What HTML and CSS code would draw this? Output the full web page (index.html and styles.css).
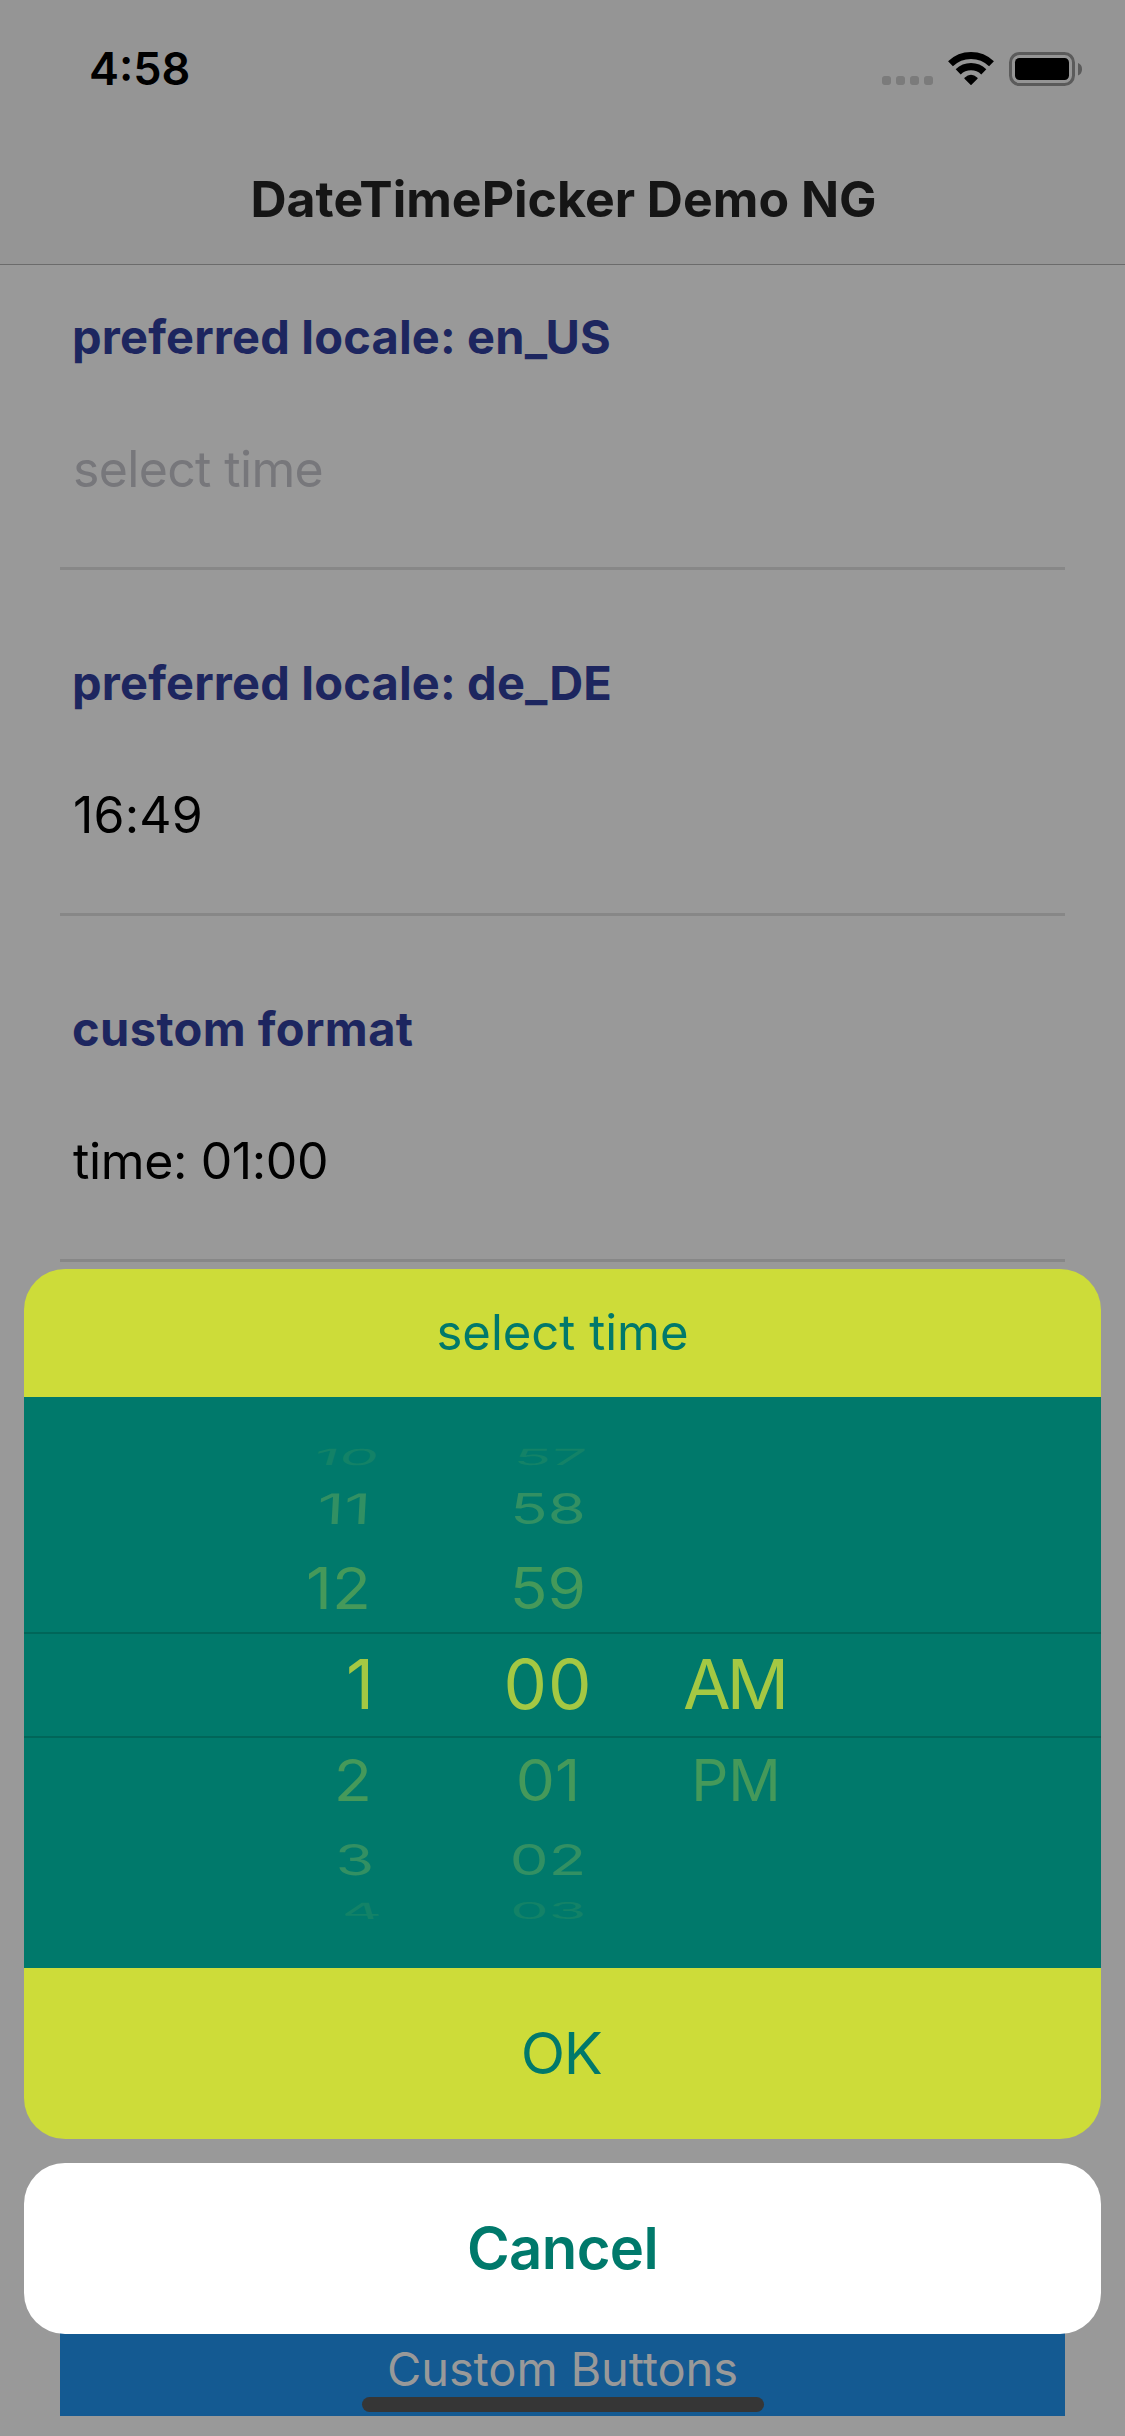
FILE: index.html
```
<!DOCTYPE html>
<html lang="en">
<head>
<meta charset="utf-8">
<title>DateTimePicker Demo NG</title>
<link rel="stylesheet" href="styles.css">
</head>
<body>
<div class="screen">
  <header class="header">
    <div class="status">
      <span class="clock">4:58</span>
      <div class="indicators">
        <svg width="51" height="34" viewBox="0 0 51 34" fill="#7b7b7b">
          <rect x="0" y="24" width="9" height="9" rx="3"/>
          <rect x="14" y="24" width="9" height="9" rx="3"/>
          <rect x="28" y="24" width="9" height="9" rx="3"/>
          <rect x="42" y="24" width="9" height="9" rx="3"/>
        </svg>
        <svg width="46" height="34" viewBox="0 0 46 34" fill="none" stroke="#000">
          <path d="M2.5 11.8A29.5 29.5 0 0 1 43.5 11.8" stroke-width="7"/>
          <path d="M10.2 19.8A18.4 18.4 0 0 1 35.8 19.8" stroke-width="7.2"/>
          <path d="M17 26.2Q23 20.8 29 26.2L23 32.2Z" fill="#000" stroke-width="1.4" stroke-linejoin="round"/>
        </svg>
        <svg width="73" height="34" viewBox="0 0 73 34">
          <rect x="1.5" y="1.5" width="63" height="31" rx="9" fill="none" stroke="#5b5b5b" stroke-width="3"/>
          <rect x="6" y="6" width="54" height="22" rx="4.5"/>
          <path d="M69 11Q73 12.4 73 17.2T69 23.4Z" fill="#5b5b5b"/>
        </svg>
      </div>
    </div>
    <h1 class="title">DateTimePicker Demo NG</h1>
  </header>

  <main class="form">
    <section class="field">
      <label class="label">preferred locale: en_US</label>
      <div class="value placeholder">select time</div>
    </section>
    <section class="field">
      <label class="label">preferred locale: de_DE</label>
      <div class="value clock-value">16:49</div>
    </section>
    <section class="field">
      <label class="label custom">custom format</label>
      <div class="value">time: 01:00</div>
    </section>
    <div class="action">Custom Buttons</div>
  </main>

  <div class="sheet">
    <div class="dialog">
      <div class="dialog-title">select time</div>
      <div class="wheel">
        <div class="row far up"><span class="hour">10</span><span class="minute">57</span></div>
        <div class="row mid up"><span class="hour">11</span><span class="minute">58</span></div>
        <div class="row near up"><span class="hour">12</span><span class="minute">59</span></div>
        <div class="row selected"><span class="hour">1</span><span class="minute">00</span><span class="period">AM</span></div>
        <div class="row near down"><span class="hour">2</span><span class="minute">01</span><span class="period">PM</span></div>
        <div class="row mid down"><span class="hour">3</span><span class="minute">02</span></div>
        <div class="row far down"><span class="hour">4</span><span class="minute">03</span></div>
      </div>
      <div class="ok">OK</div>
    </div>
    <div class="cancel">Cancel</div>
  </div>
  <div class="home-indicator"></div>
</div>
</body>
</html>
```
FILE: styles.css
```
* { box-sizing: border-box; }

body {
  margin: 0;
  font-family: Inter, "Liberation Sans", sans-serif;
}

.screen {
  position: relative;
  display: flex;
  flex-direction: column;
  width: 1125px;
  height: 2436px;
  overflow: hidden;
  background: #999;
}

/* Status bar and title */
.header {
  height: 265px;
  background: #959595;
  border-bottom: 1px solid #6b6b6b;
}

.status {
  display: flex;
  justify-content: space-between;
  align-items: center;
  height: 132px;
  padding: 6px 43px 0 89px;
}

.clock {
  font-size: 45px;
  font-weight: 600;
  line-height: 60px;
}

.indicators {
  display: flex;
  gap: 15px;
}

.indicators svg { display: block; }

.title {
  margin: 0;
  padding: 1px 0 0 2px;
  text-align: center;
  font-size: 50px;
  font-weight: 700;
  line-height: 132px;
  color: #151515;
}

/* Form */
.form {
  flex: 1;
  display: flex;
  flex-direction: column;
  gap: 41px;
  padding: 0 60px 20px;
}

.field {
  height: 305px;
  padding: 42px 12px 0;
  border-bottom: 3px solid #878787;
}

.label {
  display: block;
  font-size: 47px;
  font-weight: 700;
  line-height: 60px;
  letter-spacing: 0.17px;
  color: #1d265f;
}

.custom { letter-spacing: 0.4px; }

.value {
  margin: 72px 0 0 1px;
  font-size: 50px;
  line-height: 60px;
  letter-spacing: -0.37px;
  color: #000;
}

.clock-value { letter-spacing: 0.2px; }

.placeholder {
  letter-spacing: -0.65px;
  color: #77777b;
}

.action {
  margin-top: auto;
  background: #145a92;
  color: #999;
  text-align: center;
  font-size: 47px;
  line-height: 94px;
  letter-spacing: -0.15px;
}

/* Action sheet */
.sheet {
  position: absolute;
  left: 24px;
  right: 24px;
  bottom: 102px;
  display: flex;
  flex-direction: column;
  gap: 24px;
  text-align: center;
  color: #00796b;
}

.dialog {
  overflow: hidden;
  border-radius: 41px;
  background: #cddc39;
}

.dialog-title {
  height: 128px;
  font-size: 49px;
  line-height: 127px;
}

.ok {
  padding-right: 3px;
  font-size: 58px;
  line-height: 171px;
  letter-spacing: -1.3px;
}

.cancel {
  border-radius: 41px;
  background: #fff;
  font-size: 58px;
  font-weight: 600;
  line-height: 171px;
  letter-spacing: -0.6px;
}

/* Time wheel */
.wheel {
  display: flex;
  flex-direction: column;
  height: 571px;
  padding-top: 35px;
  background: #00796b;
}

.row {
  display: grid;
  grid-template-columns: 347px 82px 190px 184px;
  align-items: center;
  flex: none;
  font-size: 57px;
  line-height: 46px;
}

.hour {
  grid-column: 1;
  text-align: right;
  transform-origin: right center;
}

.minute { grid-column: 3; }
.period { grid-column: 4; }

.selected {
  height: 106px;
  padding-bottom: 3px;
  border: solid #006659;
  border-width: 2px 0;
  font-size: 69px;
  color: #a4c843;
}

.selected .hour { transform: translateX(3px); }
.selected .minute { letter-spacing: 1px; }
.selected .period { letter-spacing: -4px; transform: translateX(-1px); }

.near { color: #45995a; }
.near.up { height: 87px; margin-top: 10px; }
.near.down { height: 84px; padding-top: 2px; }
.near .hour { transform: scaleX(1.12); }
.near.down .hour { transform: translateX(1px) scaleX(1.1); }
.near .minute { transform: scaleX(1.09); }
.near .period { transform: translateX(1px) scaleX(1.02); }

.mid { color: #329063; }
.mid.up { height: 53px; }
.mid.down { height: 56px; margin-top: 10px; }
.mid .minute { transform: scale(1.08, 0.735); }
.mid.up .hour { transform: translateX(0) scale(1.16, 0.735) skewX(-2deg); }
.mid.down .hour { transform: translateX(3px) scale(1.1, 0.735) skewX(2deg); }

.far { color: #138267; }
.far.up { height: 50px; }
.far.down { height: 46px; }
.far.up .minute { transform: translateX(2px) scale(1.08, 0.39) skewX(-3deg); }
.far.down .minute { transform: scale(1.07, 0.39); }
.far.up .hour { transform: translateX(8px) scale(1.1, 0.39) skewX(-6deg); }
.far.down .hour { transform: translateX(10px) scale(1.1, 0.39) skewX(6deg); }

.home-indicator {
  position: absolute;
  left: 362px;
  bottom: 24px;
  width: 402px;
  height: 15px;
  border-radius: 8px;
  background: #363636;
}
```
